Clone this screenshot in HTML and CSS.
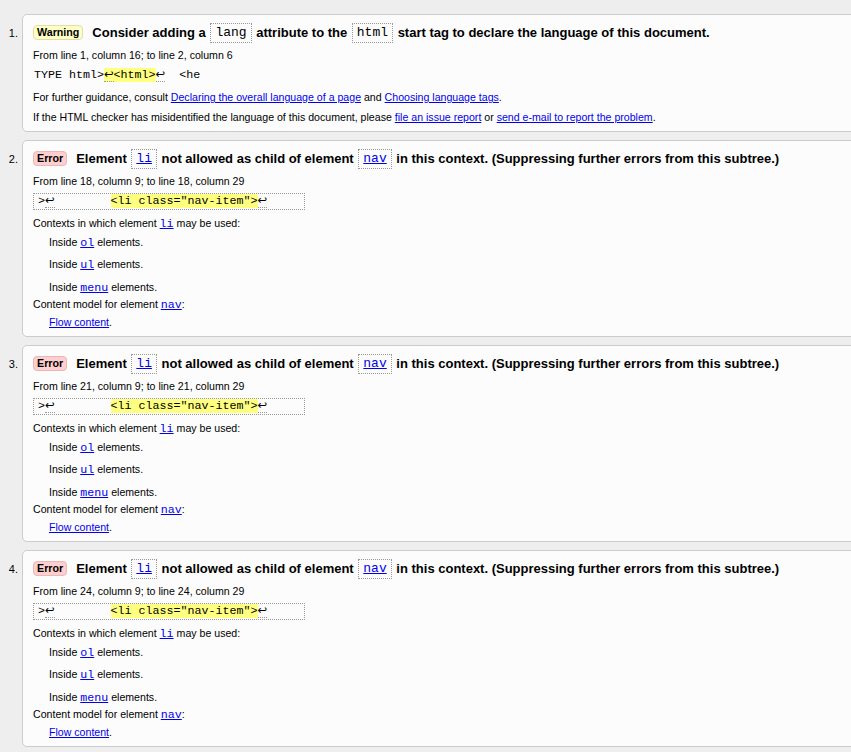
FILE: index.html
```html
<!DOCTYPE html>
<html>
<head>
<meta charset="utf-8">
<link rel="stylesheet" href="styles.css">
</head>
<body>
<ol class="results">
  <li class="item">
    <span class="num">1.</span>
    <div class="card">
      <p class="title"><span class="badge warning">Warning</span>Consider adding a <code class="tc">lang</code> attribute to the <code class="tc">html</code> start tag to declare the language of this document.</p>
      <p class="loc">From line 1, column 16; to line 2, column 6</p>
      <p class="extract">TYPE html&gt;<mark><span class="lf">↩</span>&lt;html&gt;</mark><span class="lf">↩</span>  &lt;he</p>
      <p class="para">For further guidance, consult <a href="#">Declaring the overall language of a page</a> and <a href="#">Choosing language tags</a>.</p>
      <p class="para">If the HTML checker has misidentified the language of this document, please <a href="#">file an issue report</a> or <a href="#">send e-mail to report the problem</a>.</p>
    </div>
  </li>
  <li class="item">
    <span class="num">2.</span>
    <div class="card">
      <p class="title"><span class="badge error">Error</span>Element <code class="tc"><a href="#">li</a></code> not allowed as child of element <code class="tc"><a href="#">nav</a></code> in this context. (Suppressing further errors from this subtree.)</p>
      <p class="loc">From line 18, column 9; to line 18, column 29</p>
      <p class="extract boxed">&gt;<span class="lf">↩</span>        <mark>&lt;li class="nav-item"&gt;</mark><span class="lf">↩</span></p>
      <p class="para">Contexts in which element <a class="mono" href="#">li</a> may be used:</p>
      <p class="ctx c1">Inside <a class="mono" href="#">ol</a> elements.</p>
      <p class="ctx c2">Inside <a class="mono" href="#">ul</a> elements.</p>
      <p class="ctx c3">Inside <a class="mono" href="#">menu</a> elements.</p>
      <p class="model">Content model for element <a class="mono" href="#">nav</a>:</p>
      <p class="ctx flow"><a href="#">Flow content</a>.</p>
    </div>
  </li>
  <li class="item">
    <span class="num">3.</span>
    <div class="card">
      <p class="title"><span class="badge error">Error</span>Element <code class="tc"><a href="#">li</a></code> not allowed as child of element <code class="tc"><a href="#">nav</a></code> in this context. (Suppressing further errors from this subtree.)</p>
      <p class="loc">From line 21, column 9; to line 21, column 29</p>
      <p class="extract boxed">&gt;<span class="lf">↩</span>        <mark>&lt;li class="nav-item"&gt;</mark><span class="lf">↩</span></p>
      <p class="para">Contexts in which element <a class="mono" href="#">li</a> may be used:</p>
      <p class="ctx c1">Inside <a class="mono" href="#">ol</a> elements.</p>
      <p class="ctx c2">Inside <a class="mono" href="#">ul</a> elements.</p>
      <p class="ctx c3">Inside <a class="mono" href="#">menu</a> elements.</p>
      <p class="model">Content model for element <a class="mono" href="#">nav</a>:</p>
      <p class="ctx flow"><a href="#">Flow content</a>.</p>
    </div>
  </li>
  <li class="item">
    <span class="num">4.</span>
    <div class="card">
      <p class="title"><span class="badge error">Error</span>Element <code class="tc"><a href="#">li</a></code> not allowed as child of element <code class="tc"><a href="#">nav</a></code> in this context. (Suppressing further errors from this subtree.)</p>
      <p class="loc">From line 24, column 9; to line 24, column 29</p>
      <p class="extract boxed">&gt;<span class="lf">↩</span>        <mark>&lt;li class="nav-item"&gt;</mark><span class="lf">↩</span></p>
      <p class="para">Contexts in which element <a class="mono" href="#">li</a> may be used:</p>
      <p class="ctx c1">Inside <a class="mono" href="#">ol</a> elements.</p>
      <p class="ctx c2">Inside <a class="mono" href="#">ul</a> elements.</p>
      <p class="ctx c3">Inside <a class="mono" href="#">menu</a> elements.</p>
      <p class="model">Content model for element <a class="mono" href="#">nav</a>:</p>
      <p class="ctx flow"><a href="#">Flow content</a>.</p>
    </div>
  </li>
</ol>
</body>
</html>
```
FILE: styles.css
```css
html {
  overflow: hidden;
}
body {
  margin: 0;
  background: #eeeeee;
  font-family: "Liberation Sans", Arial, sans-serif;
  font-size: 10.6px;
  color: #000;
}
p {
  margin: 0;
}
a {
  color: #0000ee;
  text-decoration: underline;
}
.results {
  list-style: none;
  margin: 14px -12px 0 0;
  padding: 0;
  display: flex;
  flex-direction: column;
  gap: 8px;
}
.item {
  display: grid;
  grid-template-columns: 22px 1fr;
}
.num {
  text-align: right;
  padding-right: 4px;
  padding-top: 12px;
  font-size: 11px;
  line-height: 14px;
}
.card {
  border: 1px solid #cccccc;
  border-radius: 5px;
  background: #fcfcfc;
  padding: 7px 10px;
}
.title {
  font-size: 13px;
  font-weight: bold;
  line-height: 21px;
  height: 21px;
  white-space: nowrap;
}
.badge {
  display: inline-block;
  vertical-align: middle;
  font-size: 10.7px;
  font-weight: bold;
  line-height: 13px;
  padding: 0 3px;
  border: 1px solid;
  border-radius: 4px;
  margin-right: 9px;
  position: relative;
  top: -1px;
}
.badge.warning {
  background: #ffffc8;
  border-color: #e2dfa6;
}
.badge.error {
  background: #ffcfcf;
  border-color: #e8b7b7;
}
.tc {
  display: inline-block;
  vertical-align: middle;
  font-family: "Liberation Mono", "Courier New", monospace;
  font-size: 13px;
  font-weight: normal;
  line-height: 18px;
  padding: 0 4px;
  margin: 0 1px;
  border: 1px dotted #999999;
  position: relative;
  top: -1px;
}
.loc {
  margin-top: 5px;
  line-height: 14px;
}
.extract {
  margin-top: 5px;
  font-family: "Liberation Mono", "Courier New", monospace;
  font-size: 11.67px;
  line-height: 15px;
  height: 15px;
  white-space: pre;
  border: 1px solid transparent;
}
.extract.boxed {
  border: 1px dotted #999999;
  width: 266px;
  padding-left: 4px;
}
mark {
  background: #ffff80;
  color: #000;
  line-height: 1;
}
.lf {
  font-family: "DejaVu Sans", sans-serif;
  font-size: 11.5px;
  line-height: 1;
  border-bottom: 1px dotted #999999;
}
.mono {
  font-family: "Liberation Mono", "Courier New", monospace;
  font-size: 11.67px;
  line-height: 1;
}
.para {
  margin-top: 6px;
  line-height: 14px;
  height: 14px;
}
.ctx {
  margin-left: 16px;
  line-height: 14px;
  height: 14px;
}
.c1 {
  margin-top: 5px;
}
.c2 {
  margin-top: 8px;
}
.c3 {
  margin-top: 9px;
}
.model {
  margin-top: 3px;
  line-height: 14px;
  height: 14px;
}
.flow {
  margin-top: 4px;
}
.loc {
  height: 14px;
}
```
